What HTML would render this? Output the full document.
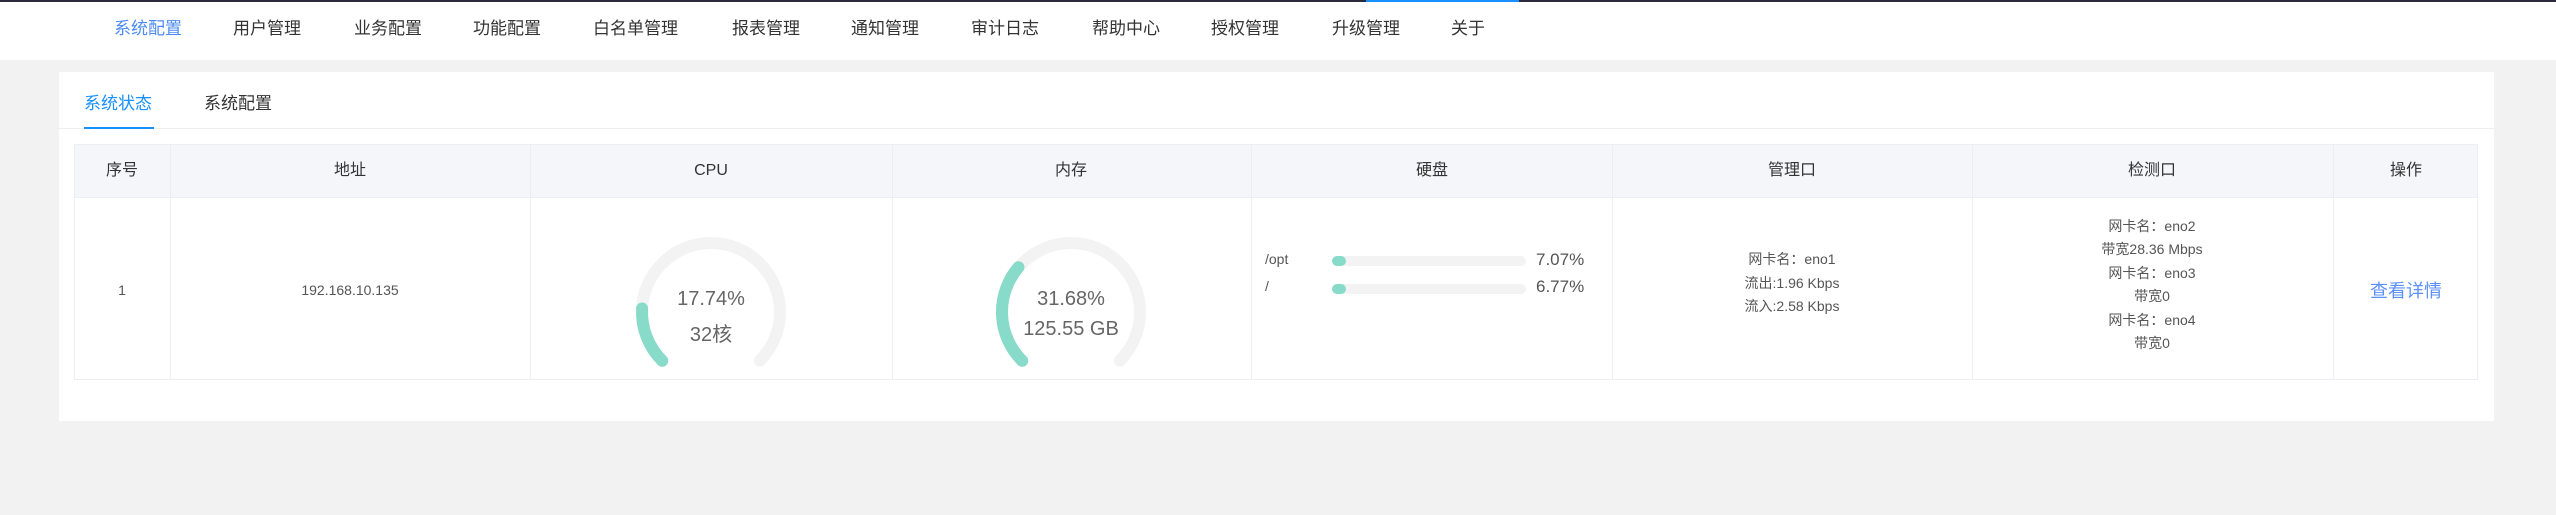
<!DOCTYPE html>
<html><head><meta charset="utf-8"><style>
*{margin:0;padding:0;box-sizing:border-box}
body{width:2556px;height:515px;background:#f2f2f2;position:relative;overflow:hidden;font-family:"Liberation Sans","Noto Sans CJK SC",sans-serif;color:#333}
.a{position:absolute;white-space:nowrap}
.nav{position:absolute;left:0;top:0;width:2556px;height:60px;background:#fff}
.nav span{position:absolute;top:18px;font-size:17px;color:#333;line-height:22px}
.card{position:absolute;left:59px;top:72px;width:2435px;height:349px;background:#fff}
.c{text-align:center;transform:translateX(-50%)}
.h{font-size:16px;color:#333;top:161px;line-height:20px}
.t{font-size:14px;color:#555;line-height:18px}
</style></head><body>
<div class="nav" style="top:2px;height:58px"></div>
<div class="a" style="left:0;top:0;width:2556px;height:2px;background:#2a2a3c"></div>
<div class="a" style="left:1366px;top:0;width:153px;height:2px;background:#1890ff"></div>
<div class="nav" style="background:transparent">
<span style="left:114px;color:#4d8cf5">系统配置</span>
<span style="left:233px">用户管理</span>
<span style="left:354px">业务配置</span>
<span style="left:473px">功能配置</span>
<span style="left:593px">白名单管理</span>
<span style="left:732px">报表管理</span>
<span style="left:851px">通知管理</span>
<span style="left:971px">审计日志</span>
<span style="left:1092px">帮助中心</span>
<span style="left:1211px">授权管理</span>
<span style="left:1332px">升级管理</span>
<span style="left:1451px">关于</span>
</div>
<div class="card"></div>
<div class="a" style="left:84px;top:89px;font-size:17px;color:#1890ff">系统状态</div>
<div class="a" style="left:204px;top:89px;font-size:17px;color:#333">系统配置</div>
<div class="a" style="left:59px;top:128px;width:2435px;height:1px;background:#eee"></div>
<div class="a" style="left:84px;top:127px;width:70px;height:2px;background:#1890ff"></div>
<div class="a" style="left:74px;top:144px;width:2404px;height:236px;border:1px solid #ebeef2;background:#fff"></div>
<div class="a" style="left:75px;top:145px;width:2402px;height:53px;background:#f4f6f9;border-bottom:1px solid #ebeef2"></div>
<div class="a" style="left:170px;top:145px;width:1px;height:235px;background:#ebeef2"></div>
<div class="a" style="left:530px;top:145px;width:1px;height:235px;background:#ebeef2"></div>
<div class="a" style="left:892px;top:145px;width:1px;height:235px;background:#ebeef2"></div>
<div class="a" style="left:1251px;top:145px;width:1px;height:235px;background:#ebeef2"></div>
<div class="a" style="left:1612px;top:145px;width:1px;height:235px;background:#ebeef2"></div>
<div class="a" style="left:1972px;top:145px;width:1px;height:235px;background:#ebeef2"></div>
<div class="a" style="left:2333px;top:145px;width:1px;height:235px;background:#ebeef2"></div>
<div class="a c h" style="left:122px">序号</div>
<div class="a c h" style="left:350px">地址</div>
<div class="a c h" style="left:711px">CPU</div>
<div class="a c h" style="left:1071px">内存</div>
<div class="a c h" style="left:1432px">硬盘</div>
<div class="a c h" style="left:1792px">管理口</div>
<div class="a c h" style="left:2152px">检测口</div>
<div class="a c h" style="left:2406px">操作</div>
<div class="a c t" style="left:122px;top:281px">1</div>
<div class="a c t" style="left:350px;top:281px">192.168.10.135</div>
<svg class="a" style="left:0;top:0" width="2556" height="515">
<g fill="none" stroke-width="12" stroke-linecap="round">
<path d="M662.2 360.8 A69 69 0 1 1 759.8 360.8" stroke="#f3f3f3"/>
<path d="M662.2 360.8 A69 69 0 0 1 642.1 308.5" stroke="#88dbc8"/>
<path d="M1022.2 360.8 A69 69 0 1 1 1119.8 360.8" stroke="#f3f3f3"/>
<path d="M1022.2 360.8 A69 69 0 0 1 1018.5 267.2" stroke="#88dbc8"/>
</g>
</svg>
<div class="a c" style="left:711px;top:288px;font-size:20px;color:#666">17.74%</div>
<div class="a c" style="left:711px;top:318px;font-size:20px;color:#666">32核</div>
<div class="a c" style="left:1071px;top:288px;font-size:20px;color:#666">31.68%</div>
<div class="a c" style="left:1071px;top:318px;font-size:20px;color:#666">125.55 GB</div>
<div class="a" style="left:1265px;top:251px;font-size:14px;color:#555">/opt</div>
<div class="a" style="left:1265px;top:278px;font-size:14px;color:#555">/</div>
<div class="a" style="left:1332px;top:256px;width:194px;height:10px;border-radius:5px;background:#f3f3f3"></div>
<div class="a" style="left:1332px;top:256px;width:14px;height:10px;border-radius:5px;background:#88dbc8"></div>
<div class="a" style="left:1332px;top:284px;width:194px;height:10px;border-radius:5px;background:#f3f3f3"></div>
<div class="a" style="left:1332px;top:284px;width:14px;height:10px;border-radius:5px;background:#88dbc8"></div>
<div class="a" style="left:1536px;top:250px;font-size:17px;color:#555">7.07%</div>
<div class="a" style="left:1536px;top:277px;font-size:17px;color:#555">6.77%</div>
<div class="a c t" style="left:1792px;top:250px">网卡名：eno1</div>
<div class="a c t" style="left:1792px;top:274px">流出:1.96 Kbps</div>
<div class="a c t" style="left:1792px;top:297px">流入:2.58 Kbps</div>
<div class="a c t" style="left:2152px;top:217px">网卡名：eno2</div>
<div class="a c t" style="left:2152px;top:240px">带宽28.36 Mbps</div>
<div class="a c t" style="left:2152px;top:264px">网卡名：eno3</div>
<div class="a c t" style="left:2152px;top:287px">带宽0</div>
<div class="a c t" style="left:2152px;top:311px">网卡名：eno4</div>
<div class="a c t" style="left:2152px;top:334px">带宽0</div>
<div class="a c" style="left:2406px;top:277px;font-size:18px;color:#5b8ff9">查看详情</div>
</body></html>
